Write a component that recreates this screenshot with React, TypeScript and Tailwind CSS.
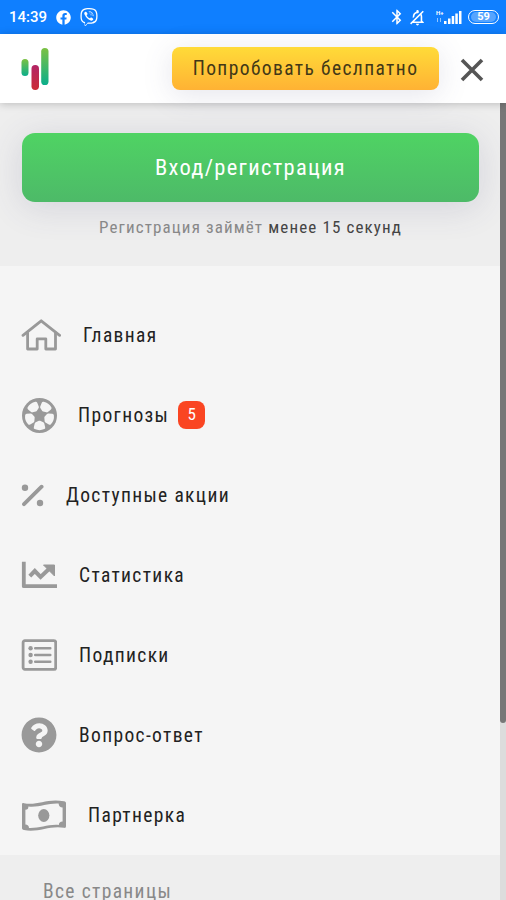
import type { ReactNode } from "react";
import { FaFacebook, FaQuestionCircle, FaViber } from "react-icons/fa";
import { MdBluetooth, MdOutlineNotificationsOff } from "react-icons/md";

function Logo() {
  return (
    <svg className="w-7 h-[44px]" viewBox="0 0 28 44" fill="none">
      <defs>
        <linearGradient id="green" x1="0" y1="0" x2="0" y2="1">
          <stop stopColor="#7cc142" />
          <stop offset="1" stopColor="#0bae8b" />
        </linearGradient>
        <linearGradient id="red" x1="0" y1="0" x2="0" y2="1">
          <stop stopColor="#b32466" />
          <stop offset="1" stopColor="#cb2d36" />
        </linearGradient>
      </defs>
      <rect x="0.5" y="12" width="7" height="17" rx="3.5" fill="url(#green)" />
      <rect x="10.5" y="18" width="7.5" height="25" rx="3.7" fill="url(#red)" />
      <rect x="20.2" y="1" width="7.3" height="37" rx="3.6" fill="url(#green)" />
    </svg>
  );
}

function HomeIcon() {
  return (
    <svg className="w-10 h-8" viewBox="0 0 40 32" fill="none" stroke="#999" strokeWidth="2.8" strokeLinejoin="round" strokeLinecap="round">
      <path d="M2 16.3 20.2 1.8 38.6 16.3" />
      <path d="M6.6 14V30H16.2V19.8H24.8V30H34.5V14" />
    </svg>
  );
}

function BallIcon() {
  return (
    <svg className="w-[35px] h-[35px] ml-px" viewBox="0 0 36 36">
      <circle cx="18" cy="18" r="18" fill="#999" />
      <g fill="#f5f5f5" stroke="#f5f5f5" strokeWidth="3.4" strokeLinejoin="round">
        {[36, 108, 180, 252, 324].map((a) => (
          <path key={a} d="M13.8 5.6Q18 3.6 22.2 5.6L21.2 9.6 18 11 14.8 9.6Z" transform={`rotate(${a} 18 18)`} />
        ))}
      </g>
    </svg>
  );
}

function PercentIcon() {
  return (
    <svg className="w-[23px] h-[23px]" viewBox="0 0 23 23" fill="#999">
      <circle cx="4" cy="3.7" r="3.2" />
      <circle cx="19" cy="19" r="3.2" />
      <path d="M3 20.2 20.6 2.7" stroke="#999" strokeWidth="3.8" strokeLinecap="round" />
    </svg>
  );
}

function ChartIcon() {
  return (
    <svg className="w-9 h-7" viewBox="0 0 36 28" fill="none" stroke="#999" strokeWidth="3.8">
      <path d="M2.8 .8V25.2H36" strokeLinejoin="round" />
      <path d="M8.8 15.2 13.8 10 19.6 16 29 7" strokeWidth="4" />
      <path d="M22.5 4H33.5V15Z" fill="#999" stroke="#999" strokeWidth="1" strokeLinejoin="round" />
    </svg>
  );
}

function ListIcon() {
  return (
    <svg className="w-9 h-8" viewBox="0 0 36 32" fill="none" stroke="#999" strokeWidth="2.8">
      <rect x="2.1" y="1.6" width="32.6" height="28.8" rx="1.8" />
      <path d="M14.2 9.2H29.3M14.2 16H29.3M14.2 22.7H29.3" strokeWidth="2.5" strokeLinecap="round" />
      <g fill="#999" stroke="none">
        <circle cx="9.6" cy="9.2" r="2.2" />
        <circle cx="9.6" cy="16" r="2.2" />
        <circle cx="9.6" cy="22.7" r="2.2" />
      </g>
    </svg>
  );
}

function MoneyIcon() {
  return (
    <svg className="w-11 h-8 translate-x-px translate-y-px" viewBox="0 0 44 32">
      <path fill="#999" fillRule="evenodd" d="M0 4.5C0 3 1 3 2 3.2 15 6 25-2 42 1.3 43.5 1.6 44 2 44 3.4V26C44 28 43 28 42 27.8 28 25 16 33 2 30 .6 29.7 0 29.3 0 28ZM6.4 6.5C6.4 8.8 5.6 9.8 3.4 9.8V24.5C5.6 24.5 7 25.8 7 28 17 28.5 26 24 36.8 24.9 37 22.8 38 21.8 40.6 21.5V7.6C38.2 7.6 36.8 6.2 36.6 3.6 26 3 17 7.6 6.4 6.5Z" />
      <ellipse cx="21.8" cy="15.5" rx="5.6" ry="6.5" fill="#999" />
    </svg>
  );
}

function Signal() {
  return (
    <svg className="w-[26px] h-4" viewBox="0 0 26 16" fill="white">
      <text x="0" y="5.5" fontSize="6" fontWeight="700">H+</text>
      <path d="M1 9h1v4H1zM4 9h1v4H4z" opacity=".55" />
      <path d="M8 12h2.5v3H8zM12 9.5h2.5V15H12zM15.7 7h2.5v8h-2.5zM19.3 4.5h2.5V15h-2.5zM23 2h2.5v13H23z" />
    </svg>
  );
}

type Item = { label: string; icon: ReactNode; gap: string; badge?: number };

const items: Item[] = [
  { label: "Главная", icon: <HomeIcon />, gap: "gap-[22px]" },
  { label: "Прогнозы", icon: <BallIcon />, gap: "gap-[21px]", badge: 5 },
  { label: "Доступные акции", icon: <PercentIcon />, gap: "gap-[22px]" },
  { label: "Статистика", icon: <ChartIcon />, gap: "gap-[22px]" },
  { label: "Подписки", icon: <ListIcon />, gap: "gap-[22px]" },
  { label: "Вопрос-ответ", icon: <FaQuestionCircle size={36} />, gap: "gap-[22px]" },
  { label: "Партнерка", icon: <MoneyIcon />, gap: "gap-[23px]" },
];

function App() {
  return (
    <div className="h-[900px] w-full overflow-hidden flex flex-col bg-[#f5f5f5] font-['Roboto_Condensed','Roboto',sans-serif] font-stretch-condensed">

      {/* STATUS BAR */}
      <div className="h-[34px] shrink-0 bg-[#0f7fff] text-white flex items-center pl-[9px] pr-[7px] font-['Roboto',sans-serif] font-stretch-normal">
        <span className="text-[15px] font-medium w-[38px] whitespace-nowrap">14:39</span>
        <FaFacebook size={15} className="ml-[9px]" />
        <FaViber size={18} className="ml-[9px]" />
        <div className="ml-auto flex items-center">
          <MdBluetooth size={18} />
          <MdOutlineNotificationsOff size={19} className="ml-[2px] -scale-x-100" />
          <div className="ml-[9px]"><Signal /></div>
          <span className="ml-[6px] w-[31px] h-[14px] rounded-full border border-white flex items-center justify-center">
            <span className="w-[25px] h-[10px] rounded-full bg-white/30 text-[11px] leading-[10px] font-bold text-center">59</span>
          </span>
        </div>
      </div>

      {/* HEADER */}
      <div className="h-[69px] shrink-0 bg-white flex items-center pl-[21px] pr-[22px] relative shadow-[0_1px_8px_rgba(0,0,0,0.22)]">
        <Logo />
        <button className="ml-auto w-[267px] h-[43px] rounded-lg bg-linear-to-b from-[#ffdb38] to-[#ffb234] text-[19.5px] tracking-[1.4px] text-[#423817] shadow-[0_5px_30px_rgba(80,80,130,0.15)]">
          Попробовать беслпатно
        </button>
        <svg className="ml-[21px] mt-[3px] w-6 h-6" viewBox="0 0 24 24" stroke="#555" strokeWidth="3.6">
          <path d="M2 2 22 22M22 2 2 22" />
        </svg>
      </div>

      <div className="flex-1 min-h-0 flex">
        <div className="flex-1 flex flex-col overflow-hidden">

          {/* LOGIN */}
          <div className="h-[163px] shrink-0 bg-[#eee] pt-[30px] pl-[22px] pr-[21px] flex flex-col items-center overflow-hidden">
            <button className="w-full h-[69px] shrink-0 rounded-[13px] bg-linear-to-b from-[#4fd363] to-[#4dba68] text-white text-[22.5px] leading-[26px] tracking-[1.3px] pb-px shadow-[0_5px_35px_rgba(70,70,120,0.16)]">
              Вход/регистрация
            </button>
            <p className="mt-[12px] text-[17px] leading-[26px] tracking-[1.12px] text-[#888] whitespace-nowrap">
              Регистрация займёт <span className="text-[#444]">менее 15 секунд</span>
            </p>
          </div>

          {/* MENU */}
          <nav className="pt-[29px] pl-[21px] shrink-0">
            {items.map((item) => (
              <div key={item.label} className={`h-20 flex items-center text-[#999] ${item.gap}`}>
                {item.icon}
                <span className="flex items-center gap-[9px] text-[19.5px] tracking-[1.35px] text-[#222] whitespace-nowrap">
                  <span className="pt-[2px]">{item.label}</span>
                  {item.badge && (
                    <span className="w-[27px] h-7 rounded-lg bg-[#fa4522] text-white text-[17px] tracking-normal flex items-center justify-center">
                      {item.badge}
                    </span>
                  )}
                </span>
              </div>
            ))}
          </nav>

          <div className="flex-1 bg-[#eee] pl-[43px] pt-[26px] text-[19.5px] leading-[22px] tracking-[1.35px] text-[#888]">
            Все страницы
          </div>
        </div>

        {/* SCROLLBAR */}
        <div className="w-[6px] bg-[#dcdcdc]">
          <div className="h-[620px] rounded-b-full bg-[#777]" />
        </div>
      </div>
    </div>
  );
}

export default App;
